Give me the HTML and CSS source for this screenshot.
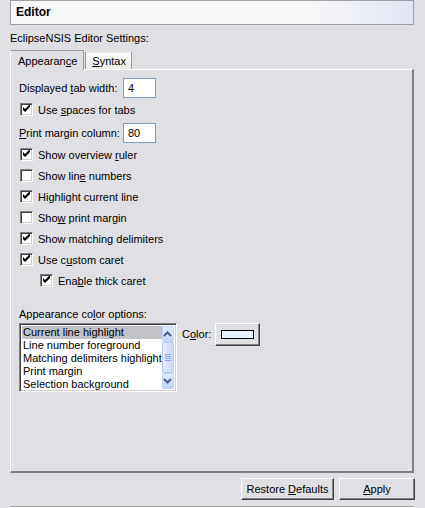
FILE: index.html
```html
<!DOCTYPE html>
<html>
<head>
<meta charset="utf-8">
<link rel="stylesheet" href="styles.css">
</head>
<body>
<div class="page">
  <div class="title">Editor</div>
  <div class="heading">EclipseNSIS Editor Settings:</div>
  <div class="tabs">
    <div class="tab active">Appearan<u>c</u>e</div>
    <div class="tab"><u>S</u>yntax</div>
    <div class="tabfill"></div>
  </div>
  <div class="panel">
    <div class="field-row">
      <span class="label">Displayed <u>t</u>ab width:</span>
      <span class="input">4</span>
    </div>
    <label class="check"><span class="box on"></span><span>Use <u>s</u>paces for tabs</span></label>
    <div class="field-row">
      <span class="label"><u>P</u>rint margin column:</span>
      <span class="input">80</span>
    </div>
    <label class="check"><span class="box on"></span><span>Show overview <u>r</u>uler</span></label>
    <label class="check"><span class="box"></span><span>Show lin<u>e</u> numbers</span></label>
    <label class="check"><span class="box on"></span><span>Hi<u>g</u>hlight current line</span></label>
    <label class="check"><span class="box"></span><span>Sho<u>w</u> print margin</span></label>
    <label class="check"><span class="box on"></span><span>Show matching delimiters</span></label>
    <label class="check"><span class="box on"></span><span>Use c<u>u</u>stom caret</span></label>
    <label class="check sub"><span class="box on"></span><span>Ena<u>b</u>le thick caret</span></label>

    <div class="colors-label">Appearance co<u>l</u>or options:</div>
    <div class="colors">
      <div class="list">
        <div class="items">
          <div class="item sel">Current line highlight</div>
          <div class="item">Line number foreground</div>
          <div class="item">Matching delimiters highlight</div>
          <div class="item">Print margin</div>
          <div class="item">Selection background</div>
        </div>
        <div class="scroll">
          <div class="sbtn"><svg width="9" height="6" viewBox="0 0 9 6"><polyline points="1,5 4.5,1.5 8,5" fill="none" stroke="#4d6185" stroke-width="2"/></svg></div>
          <div class="track"><div class="thumb"><span></span><span></span><span></span><span></span></div></div>
          <div class="sbtn"><svg width="9" height="6" viewBox="0 0 9 6"><polyline points="1,1 4.5,4.5 8,1" fill="none" stroke="#4d6185" stroke-width="2"/></svg></div>
        </div>
      </div>
      <span class="color-label">C<u>o</u>lor:</span>
      <div class="color-btn"><span class="swatch"></span></div>
    </div>
  </div>
  <div class="buttons">
    <div class="btn wide">Restore <u>D</u>efaults</div>
    <div class="btn"><u>A</u>pply</div>
  </div>
  <div class="bottom"></div>
</div>
</body>
</html>
```

FILE: styles.css
```css
html, body {
  margin: 0;
  padding: 0;
  background: #e0dfe3;
}
body {
  font-family: "Liberation Sans", Arial, sans-serif;
  font-size: 11px;
  color: #000;
  width: 425px;
  height: 508px;
  overflow: hidden;
}
u { text-decoration: underline; text-underline-offset: 1px; }
.page {
  padding: 0 11px 0 10px;
  display: flex;
  flex-direction: column;
}
.title {
  height: 23px;
  border: 1px solid #a0a0a0;
  background: linear-gradient(90deg, #f7f7f8 0%, #f7f7f8 75%, #dfe5f4 100%);
  font-weight: bold;
  font-size: 12px;
  line-height: 23px;
  padding-left: 5px;
}
.heading {
  height: 24px;
  line-height: 26px;
}
.tabs {
  display: flex;
  align-items: flex-end;
  height: 20px;
}
.tab {
  height: 16px;
  line-height: 16px;
  padding: 0 5px 0 6px;
  border: 1px solid #919b9c;
  border-bottom: none;
  border-top: 2px solid #e8e8e8;
  background: linear-gradient(#fbfbfb, #ecebe6);
  margin-left: 1px;
}
.tab.active {
  height: 19px;
  line-height: 20px;
  padding: 0 6px 0 7px;
  background: #e0dfe3;
  border-top: 1px solid #919b9c;
  border-left-color: #ffffff;
  margin-left: 0;
  position: relative;
  z-index: 1;
  margin-bottom: -1px;
}
.tabfill { flex: 1; }
.panel {
  height: 394px;
  border-top: 1px solid #ffffff;
  border-left: 1px solid #ffffff;
  border-right: 2px solid #808080;
  border-bottom: 2px solid #808080;
  padding: 7px 0 0 8px;
  display: flex;
  flex-direction: column;
  align-items: flex-start;
}
.field-row {
  display: flex;
  align-items: center;
  height: 21px;
}
.label { width: 104px; }
.input {
  box-sizing: border-box;
  width: 33px;
  height: 20px;
  border: 1px solid #7f9db9;
  background: #fff;
  line-height: 18px;
  padding-left: 4px;
}
.check {
  display: flex;
  align-items: center;
  height: 21px;
  padding-left: 1px;
}
.check.sub { padding-left: 21px; }
.field-row + .check { margin-top: 1px; }
.check + .field-row { margin-top: 2px; }
.box {
  box-sizing: border-box;
  width: 13px;
  height: 13px;
  border: 1px solid;
  border-color: #808080 #ffffff #ffffff #808080;
  box-shadow: inset 1px 1px 0 #404040, inset -1px -1px 0 #d4d0c8;
  background: #fff;
  margin-right: 5px;
  position: relative;
}
.box.on::after {
  content: "";
  position: absolute;
  left: 2px;
  top: 1px;
  width: 7px;
  height: 7px;
  background: url("data:image/svg+xml;utf8,<svg xmlns='http://www.w3.org/2000/svg' width='7' height='7'><path d='M0 2v3l2 2 5-5V-1L2 4z' fill='black'/></svg>") no-repeat;
}
.colors-label {
  margin-top: 16px;
  height: 16px;
  line-height: 14px;
}
.colors {
  display: flex;
  align-items: flex-start;
}
.list {
  box-sizing: border-box;
  width: 158px;
  height: 69px;
  border: 1px solid;
  border-color: #808080 #ffffff #ffffff #808080;
  box-shadow: inset 1px 1px 0 #404040, inset -1px -1px 0 #d4d0c8;
  background: #fff;
  display: flex;
  padding: 2px;
}
.items { flex: 1; }
.item {
  height: 13px;
  line-height: 13px;
  white-space: nowrap;
  padding-left: 1px;
}
.item.sel { background: #c1c1c8; }
.scroll {
  width: 16px;
  display: flex;
  flex-direction: column;
  background: #f4f4f0;
}
.sbtn {
  box-sizing: border-box;
  height: 16px;
  border: 1px solid #c3d3fd;
  background: linear-gradient(#e1eafe, #c1d3fb);
  display: flex;
  align-items: center;
  justify-content: center;
  border-radius: 2px;
}
.track { flex: 1; display: flex; flex-direction: column; }
.thumb {
  flex: 1;
  border: 1px solid #b4c8f6;
  background: linear-gradient(90deg, #e6ecfe, #cad8fb);
  border-radius: 2px;
  display: flex;
  flex-direction: column;
  align-items: center;
  justify-content: center;
  gap: 1px;
}
.thumb span { width: 6px; height: 1px; background: #8ea6e6; }
.color-label {
  margin-left: 5px;
  line-height: 22px;
}
.color-btn {
  box-sizing: border-box;
  margin-left: 4px;
  width: 45px;
  height: 23px;
  border: 1px solid;
  border-color: #ffffff #404040 #404040 #ffffff;
  box-shadow: inset -1px -1px 0 #808080;
  background: #e0dfe3;
  display: flex;
  align-items: center;
  justify-content: center;
}
.swatch {
  width: 31px;
  height: 7px;
  border: 1px solid #000;
  background: #e8f2fe;
}
.buttons {
  display: flex;
  justify-content: flex-end;
  gap: 5px;
  margin-top: 5px;
  margin-right: -1px;
}
.btn {
  box-sizing: border-box;
  width: 76px;
  height: 22px;
  border: 1px solid;
  border-color: #ffffff #404040 #404040 #ffffff;
  box-shadow: inset -1px -1px 0 #808080;
  background: #e0dfe3;
  text-align: center;
  line-height: 20px;
}
.btn.wide { width: 93px; }
.bottom {
  margin-top: 6px;
  border-top: 1px solid #a0a0a0;
  border-bottom: 1px solid #ffffff;
}
```
